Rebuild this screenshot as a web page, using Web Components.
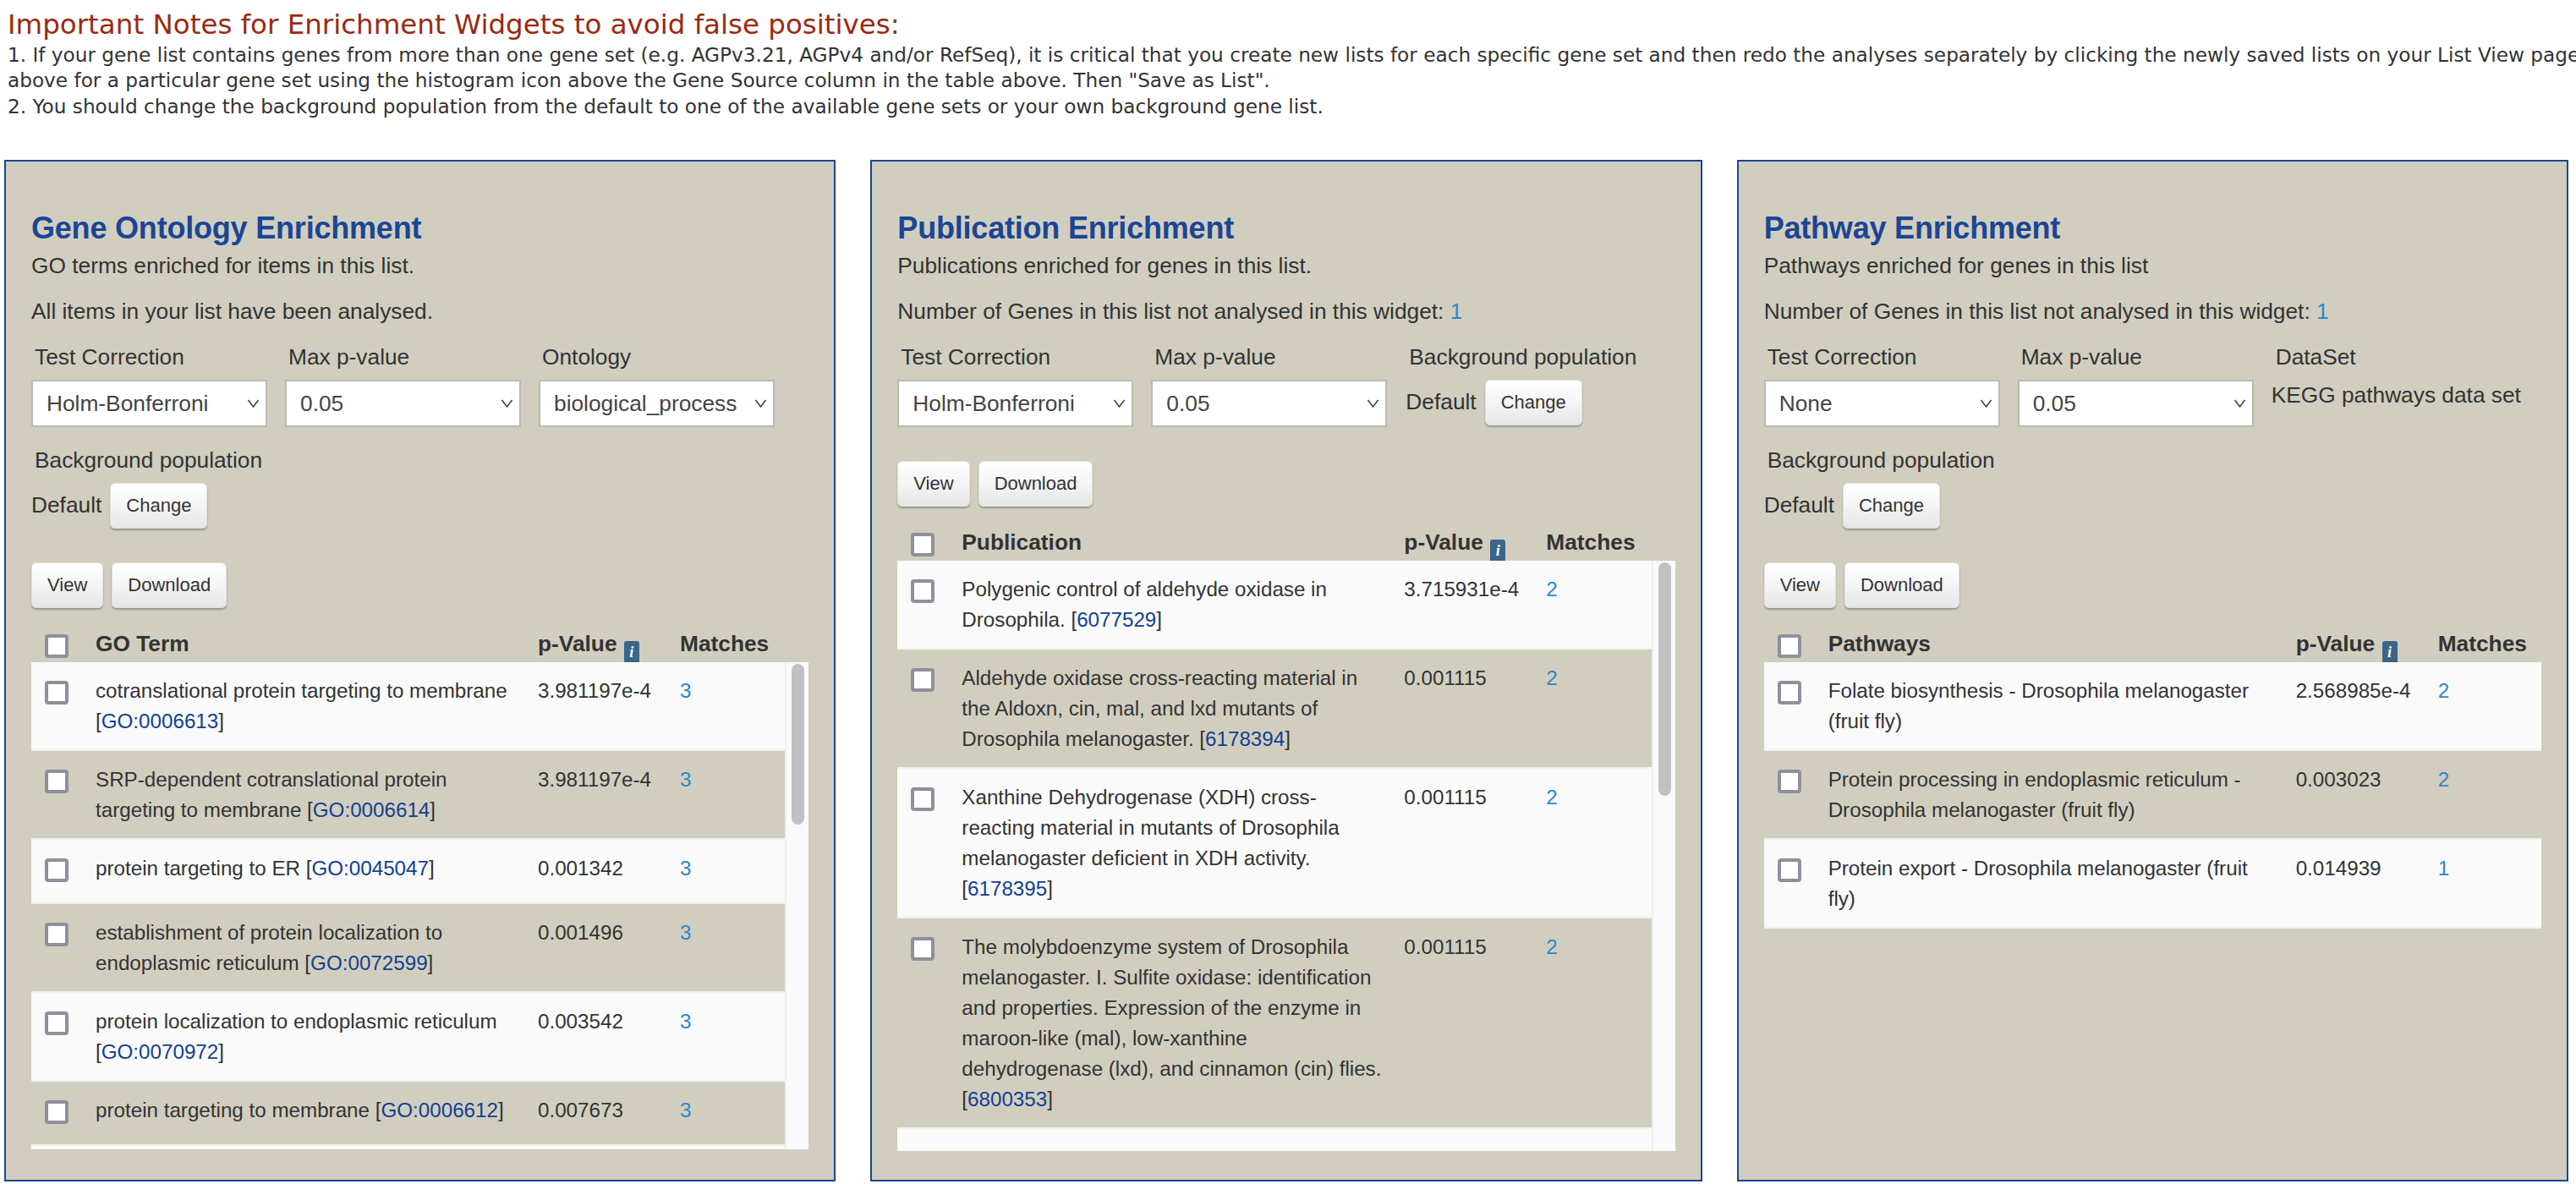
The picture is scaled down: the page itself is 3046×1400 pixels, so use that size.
<!DOCTYPE html>
<html>
<head>
<meta charset="utf-8">
<title>Enrichment widgets</title>
<style>
html, body { margin: 0; height: 1400px; overflow: hidden; background: #fff; }
body { font-family: "Liberation Sans", Arial, sans-serif; color: #333; }
</style>
</head>
<body>
<enrich-notes heading="Important Notes for Enrichment Widgets to avoid false positives:">
  <div>1. If your gene list contains genes from more than one gene set (e.g. AGPv3.21, AGPv4 and/or RefSeq), it is critical that you create new lists for each specific gene set and then redo the analyses separately by clicking the newly saved lists on your List View page.</div>
  <div>above for a particular gene set using the histogram icon above the Gene Source column in the table above. Then "Save as List".</div>
  <div>2. You should change the background population from the default to one of the available gene sets or your own background gene list.</div>
</enrich-notes>

<widget-row>
  <enrich-widget heading="Gene Ontology Enrichment" desc="GO terms enriched for items in this list.">
    <span slot="status">All items in your list have been analysed.</span>
    <form-field label="Test Correction"><drop-down>Holm-Bonferroni</drop-down></form-field>
    <form-field label="Max p-value"><drop-down>0.05</drop-down></form-field>
    <form-field label="Ontology"><drop-down>biological_process</drop-down></form-field>
    <background-field></background-field>
    <action-bar slot="actions"></action-bar>
    <result-table slot="table" name="GO Term" height="576" thumb="190">
      <result-row p="3.981197e-4" m="3">cotranslational protein targeting to membrane [<go-link>GO:0006613</go-link>]</result-row>
      <result-row p="3.981197e-4" m="3">SRP-dependent cotranslational protein targeting to membrane [<go-link>GO:0006614</go-link>]</result-row>
      <result-row p="0.001342" m="3">protein targeting to ER [<go-link>GO:0045047</go-link>]</result-row>
      <result-row p="0.001496" m="3">establishment of protein localization to endoplasmic reticulum [<go-link>GO:0072599</go-link>]</result-row>
      <result-row p="0.003542" m="3">protein localization to endoplasmic reticulum [<go-link>GO:0070972</go-link>]</result-row>
      <result-row p="0.007673" m="3">protein targeting to membrane [<go-link>GO:0006612</go-link>]</result-row>
      <result-row></result-row>
    </result-table>
  </enrich-widget>

  <enrich-widget heading="Publication Enrichment" desc="Publications enriched for genes in this list.">
    <span slot="status">Number of Genes in this list not analysed in this widget: <match-count>1</match-count></span>
    <form-field label="Test Correction"><drop-down>Holm-Bonferroni</drop-down></form-field>
    <form-field label="Max p-value"><drop-down>0.05</drop-down></form-field>
    <background-field inline></background-field>
    <action-bar slot="actions"></action-bar>
    <result-table slot="table" name="Publication" height="698" thumb="276">
      <result-row p="3.715931e-4" m="2">Polygenic control of aldehyde oxidase in Drosophila. [<go-link>6077529</go-link>]</result-row>
      <result-row p="0.001115" m="2">Aldehyde oxidase cross-reacting material in the Aldoxn, cin, mal, and lxd mutants of Drosophila melanogaster. [<go-link>6178394</go-link>]</result-row>
      <result-row p="0.001115" m="2">Xanthine Dehydrogenase (XDH) cross-reacting material in mutants of Drosophila melanogaster deficient in XDH activity. [<go-link>6178395</go-link>]</result-row>
      <result-row p="0.001115" m="2">The molybdoenzyme system of Drosophila melanogaster. I. Sulfite oxidase: identification and properties. Expression of the enzyme in maroon-like (mal), low-xanthine dehydrogenase (lxd), and cinnamon (cin) flies. [<go-link>6800353</go-link>]</result-row>
      <result-row></result-row>
    </result-table>
  </enrich-widget>

  <enrich-widget heading="Pathway Enrichment" desc="Pathways enriched for genes in this list">
    <span slot="status">Number of Genes in this list not analysed in this widget: <match-count>1</match-count></span>
    <form-field label="Test Correction"><drop-down>None</drop-down></form-field>
    <form-field label="Max p-value"><drop-down>0.05</drop-down></form-field>
    <form-field label="DataSet" plain>KEGG pathways data set</form-field>
    <background-field></background-field>
    <action-bar slot="actions"></action-bar>
    <result-table slot="table" name="Pathways">
      <result-row p="2.568985e-4" m="2">Folate biosynthesis - Drosophila melanogaster (fruit fly)</result-row>
      <result-row p="0.003023" m="2">Protein processing in endoplasmic reticulum - Drosophila melanogaster (fruit fly)</result-row>
      <result-row p="0.014939" m="1">Protein export - Drosophila melanogaster (fruit fly)</result-row>
    </result-table>
  </enrich-widget>
</widget-row>

<script>
// small helper so every element gets an open shadow root with its own style
function shadow(el, html) {
  el.attachShadow({ mode: 'open' }).innerHTML = html;
}

class EnrichNotes extends HTMLElement {
  connectedCallback() {
    shadow(this, `<style>
      :host { display: block; height: 189px; padding: 7px 0 0 9px; box-sizing: border-box; white-space: nowrap; overflow: hidden;
        font-family: "DejaVu Sans", sans-serif; color: #333; font-size: 23.2px; line-height: 30.3px; }
      h2 { margin: 0 0 -1px; font-weight: normal; font-size: 32.5px; line-height: 44px; color: #9b2a10; }
    </style><h2>${this.getAttribute('heading')}</h2><slot></slot>`);
  }
}

class WidgetRow extends HTMLElement {
  connectedCallback() {
    shadow(this, `<style>
      :host { display: grid; grid-template-columns: repeat(3, 983.33px); column-gap: 41px; height: 1208px; margin-left: 5px; }
    </style><slot></slot>`);
  }
}

class EnrichWidget extends HTMLElement {
  connectedCallback() {
    shadow(this, `<style>
      :host { display: block; box-sizing: border-box; height: 1208px; border: 2px solid #1b4595; background: #d1cebf; padding: 59px 30px 0; color: #333; overflow: hidden; }
      h3 { margin: 0; font-size: 36px; line-height: 40px; font-weight: bold; color: #1b4595; letter-spacing: -.2px; }
      p { margin: 6px 0 18px; font-size: 26.3px; line-height: 36px; }
      .status { font-size: 26.3px; line-height: 36px; margin-bottom: 18px; }
      .form { display: flex; flex-wrap: wrap; column-gap: 21px; }
    </style>
    <h3>${this.getAttribute('heading')}</h3>
    <p>${this.getAttribute('desc')}</p>
    <div class="status"><slot name="status"></slot></div>
    <div class="form"><slot></slot></div>
    <slot name="actions"></slot>
    <slot name="table"></slot>`);
  }
}

class FormField extends HTMLElement {
  connectedCallback() {
    const plain = this.hasAttribute('plain');
    shadow(this, `<style>
      :host { display: block; width: ${plain ? 'auto' : '279px'}; font-size: 26.3px; }
      .lab { padding-left: ${plain ? '5px' : '4px'}; line-height: 36px; margin-bottom: 9px; }
      .val { ${plain ? 'line-height: 36px;' : ''} }
    </style><div class="lab">${this.getAttribute('label')}</div><div class="val"><slot></slot></div>`);
  }
}

class DropDown extends HTMLElement {
  connectedCallback() {
    shadow(this, `<style>
      :host { display: flex; align-items: center; justify-content: space-between; box-sizing: border-box; height: 56px; padding: 0 7px 0 16px;
        background: #fff; border: 2px solid #bab9b5; font-size: 26.3px; color: #444; }
      svg { width: 15px; height: 10px; flex: none; }
    </style><span><slot></slot></span>
    <svg viewBox="0 0 15 10"><path d="M1.5 1 L7.5 9 L13.5 1" fill="none" stroke="#444" stroke-width="1.6"/></svg>`);
  }
}

class SoftButton extends HTMLElement {
  connectedCallback() {
    shadow(this, `<style>
      :host { display: inline-flex; align-items: center; justify-content: center; box-sizing: border-box; height: 54px; padding: 0 18px;
        background: linear-gradient(#fff, #f6f6f6 45%, #e6e6e6); border-radius: 6px; border: 1px solid #e3e1da;
        box-shadow: 0 2px 2px rgba(0,0,0,.28); font-size: 22px; color: #333; }
    </style><slot></slot>`);
  }
}

class BackgroundField extends HTMLElement {
  connectedCallback() {
    const inline = this.hasAttribute('inline');
    shadow(this, `<style>
      :host { display: block; font-size: 26.3px; ${inline ? 'width: auto; margin-left: 1px;' : 'width: 100%; margin-top: 21px;'} }
      .lab { padding-left: 4px; line-height: 36px; margin-bottom: 9px; }
      .row { display: flex; align-items: flex-start; gap: 10px; }
      .row span { line-height: 36px; padding-top: 8px; }
    </style><div class="lab">Background population</div>
    <div class="row"><span>Default</span><soft-button>Change</soft-button></div>`);
  }
}

class ActionBar extends HTMLElement {
  connectedCallback() {
    shadow(this, `<style>
      :host { display: flex; gap: 10px; margin-top: 40px; }
    </style><soft-button>View</soft-button><soft-button>Download</soft-button>`);
  }
}

class TickBox extends HTMLElement {
  connectedCallback() {
    shadow(this, `<style>
      :host { display: block; box-sizing: border-box; width: 28px; height: 28px; background: #fff; border: 4px solid #8f8f9d; border-radius: 4px; }
    </style>`);
  }
}

class GoLink extends HTMLElement {
  connectedCallback() {
    shadow(this, `<style>:host { color: #123f92; }</style><slot></slot>`);
  }
}

class MatchCount extends HTMLElement {
  connectedCallback() {
    shadow(this, `<style>:host { color: #2e86c9; }</style><slot></slot>`);
  }
}

class ResultTable extends HTMLElement {
  connectedCallback() {
    const height = this.getAttribute('height');
    const thumb = this.getAttribute('thumb');
    const scroll = !!thumb;
    this.style.setProperty('--mid', scroll ? '523px' : '553px');
    this.style.setProperty('--pad', scroll ? '18px' : '30px');
    shadow(this, `<style>
      :host { display: block; }
      .head { display: grid; grid-template-columns: 76px var(--mid) 168px 1fr; align-items: center; height: 64px; padding-top: 20px; box-sizing: border-box; font-size: 26.3px; line-height: 36px; font-weight: bold; color: #333; }
      .head tick-box { margin-left: 16px; margin-top: 6px; }
      .info { display: inline-block; vertical-align: -7px; width: 18px; height: 27px; margin: -10px 0 -10px 1px; border-radius: 3px; background: #3a6689; color: #fff;
        font: italic bold 18px/27px "Liberation Serif", serif; text-align: center; }
      .body { display: flex; ${height ? `height: ${height}px;` : ''} overflow: hidden; }
      .rows { flex: 1; min-width: 0; }
      .track { flex: none; width: 28px; box-sizing: border-box; background: #fafafa; border-left: 2px solid #eeeeee; padding: 2px 5px 0 6px; }
      .thumb { height: ${thumb}px; background: #c1c1c1; border-radius: 8px; }
    </style>
    <div class="head"><tick-box></tick-box><div>${this.getAttribute('name')}</div><div>p-Value <span class="info">i</span></div><div>Matches</div></div>
    <div class="body"><div class="rows"><slot></slot></div>${scroll ? `<div class="track"><div class="thumb"></div></div>` : ''}</div>`);
  }
}

class ResultRow extends HTMLElement {
  connectedCallback() {
    shadow(this, `<style>
      :host { display: grid; grid-template-columns: 76px var(--mid) 168px 1fr; box-sizing: border-box; min-height: 76px; padding: 16px 0 15px; background: #d1cebf;
        border-bottom: 2px solid #f1f1ee; font-size: 24.2px; line-height: 36px; color: #333; }
      :host(:nth-child(odd)) { background: #fafafa; }
      tick-box { margin: 6px 0 0 16px; }
      .txt { padding-right: var(--pad); }
      .m { color: #2e86c9; }
    </style>
    <div>${this.hasAttribute('p') ? '<tick-box></tick-box>' : ''}</div>
    <div class="txt"><slot></slot></div>
    <div>${this.getAttribute('p') || ''}</div>
    <div class="m">${this.getAttribute('m') || ''}</div>`);
  }
}

customElements.define('enrich-notes', EnrichNotes);
customElements.define('widget-row', WidgetRow);
customElements.define('enrich-widget', EnrichWidget);
customElements.define('form-field', FormField);
customElements.define('drop-down', DropDown);
customElements.define('soft-button', SoftButton);
customElements.define('background-field', BackgroundField);
customElements.define('action-bar', ActionBar);
customElements.define('tick-box', TickBox);
customElements.define('go-link', GoLink);
customElements.define('match-count', MatchCount);
customElements.define('result-table', ResultTable);
customElements.define('result-row', ResultRow);
</script>
</body>
</html>
